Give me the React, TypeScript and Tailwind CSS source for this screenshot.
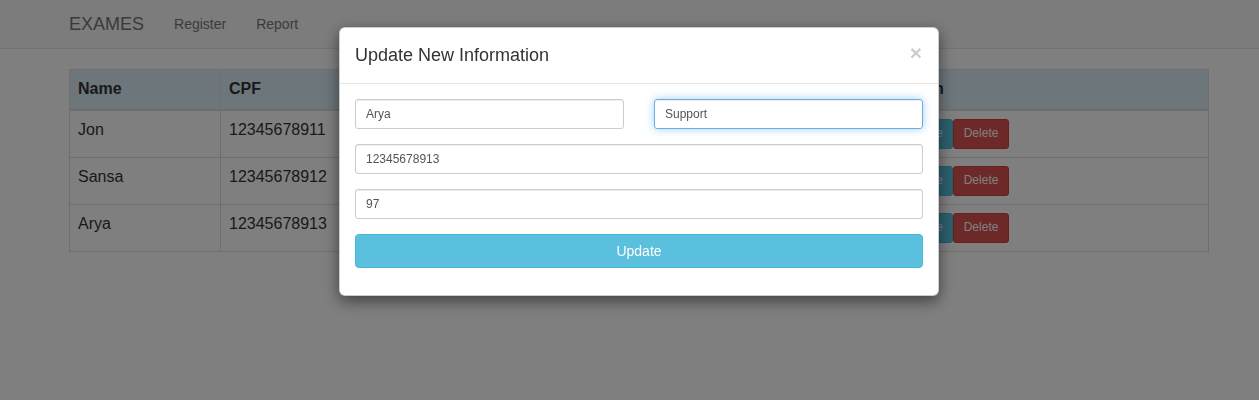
const people = [
  { name: "Jon", cpf: "12345678911", age: "23", role: "Manager" },
  { name: "Sansa", cpf: "12345678912", age: "21", role: "Analyst" },
  { name: "Arya", cpf: "12345678913", age: "97", role: "Support" },
];

const App = () => {
  return (
    <div className="relative min-h-[400px] bg-white font-['Liberation_Sans',Arial,sans-serif] text-[#333]">
      {/* navbar */}
      <div className="h-[49px] bg-[#f8f8f8] border-b border-[#e7e7e7]">
        <div className="ml-[69px] flex h-full items-center">
          <span className="text-[18px] text-[#777] pr-[15px]">EXAMES</span>
          <a className="px-[15px] text-[14px] text-[#777]">Register</a>
          <a className="px-[15px] text-[14px] text-[#777]">Report</a>
        </div>
      </div>

      {/* table */}
      <div className="ml-[69px] mt-[20px] w-[1140px]">
        <table className="w-full border-collapse text-[16px] leading-[1.42857]">
          <thead>
            <tr className="bg-[#d9edf7]">
              <th className="w-[151px] border border-[#ddd] border-b-2 p-2 text-left">Name</th>
              <th className="w-[200px] border border-[#ddd] border-b-2 p-2 text-left">CPF</th>
              <th className="w-[200px] border border-[#ddd] border-b-2 p-2 text-left">Age</th>
              <th className="w-[265px] border border-[#ddd] border-b-2 p-2 text-left">Position</th>
              <th className="border border-[#ddd] border-b-2 p-2 text-left">Action</th>
            </tr>
          </thead>
          <tbody>
            {people.map((p) => (
              <tr key={p.cpf}>
                <td className="border border-[#ddd] p-2 align-top">{p.name}</td>
                <td className="border border-[#ddd] p-2 align-top">{p.cpf}</td>
                <td className="border border-[#ddd] p-2 align-top">{p.age}</td>
                <td className="border border-[#ddd] p-2 align-top">{p.role}</td>
                <td className="border border-[#ddd] p-2 align-top">
                  <div className="flex">
                    <button className="h-[30px] rounded-[3px] border border-[#46b8da] bg-[#5bc0de] px-[9px] text-[12px] text-white">
                      Update
                    </button>
                    <button className="h-[30px] rounded-[3px] border border-[#d43f3a] bg-[#d9534f] px-[10px] text-[12px] text-white">
                      Delete
                    </button>
                  </div>
                </td>
              </tr>
            ))}
          </tbody>
        </table>
      </div>

      {/* backdrop */}
      <div className="fixed inset-0 bg-black/50"></div>

      {/* modal */}
      <div className="fixed left-[339px] top-[27px] w-[600px] rounded-[6px] border border-black/20 bg-white shadow-[0_5px_15px_rgba(0,0,0,0.5)]">
        <div className="flex items-start justify-between border-b border-[#e5e5e5] p-[15px]">
          <h4 className="text-[18px] leading-[25px] text-[#333]">Update New Information</h4>
          <span className="-mt-[1px] mr-[1px] text-[21px] font-bold leading-none text-black opacity-20">×</span>
        </div>
        <div className="p-[15px] pb-[27px]">
          <div className="grid grid-cols-2 gap-x-[30px]">
            <input
              defaultValue="Arya"
              className="h-[30px] rounded-[3px] border border-[#ccc] px-[10px] text-[12px] text-[#555] shadow-[inset_0_1px_1px_rgba(0,0,0,0.075)] outline-none"
            />
            <input
              defaultValue="Support"
              className="h-[30px] rounded-[3px] border border-[#66afe9] px-[10px] text-[12px] text-[#555] shadow-[inset_0_1px_1px_rgba(0,0,0,0.075),0_0_8px_rgba(102,175,233,0.6)] outline-none"
            />
          </div>
          <input
            defaultValue="12345678913"
            className="mt-[15px] block h-[30px] w-full rounded-[3px] border border-[#ccc] px-[10px] text-[12px] text-[#555] shadow-[inset_0_1px_1px_rgba(0,0,0,0.075)] outline-none"
          />
          <input
            defaultValue="97"
            className="mt-[15px] block h-[30px] w-full rounded-[3px] border border-[#ccc] px-[10px] text-[12px] text-[#555] shadow-[inset_0_1px_1px_rgba(0,0,0,0.075)] outline-none"
          />
          <button className="mt-[15px] block h-[34px] w-full rounded-[4px] border border-[#46b8da] bg-[#5bc0de] text-[14px] text-white">
            Update
          </button>
        </div>
      </div>
    </div>
  );
};
export default App;
